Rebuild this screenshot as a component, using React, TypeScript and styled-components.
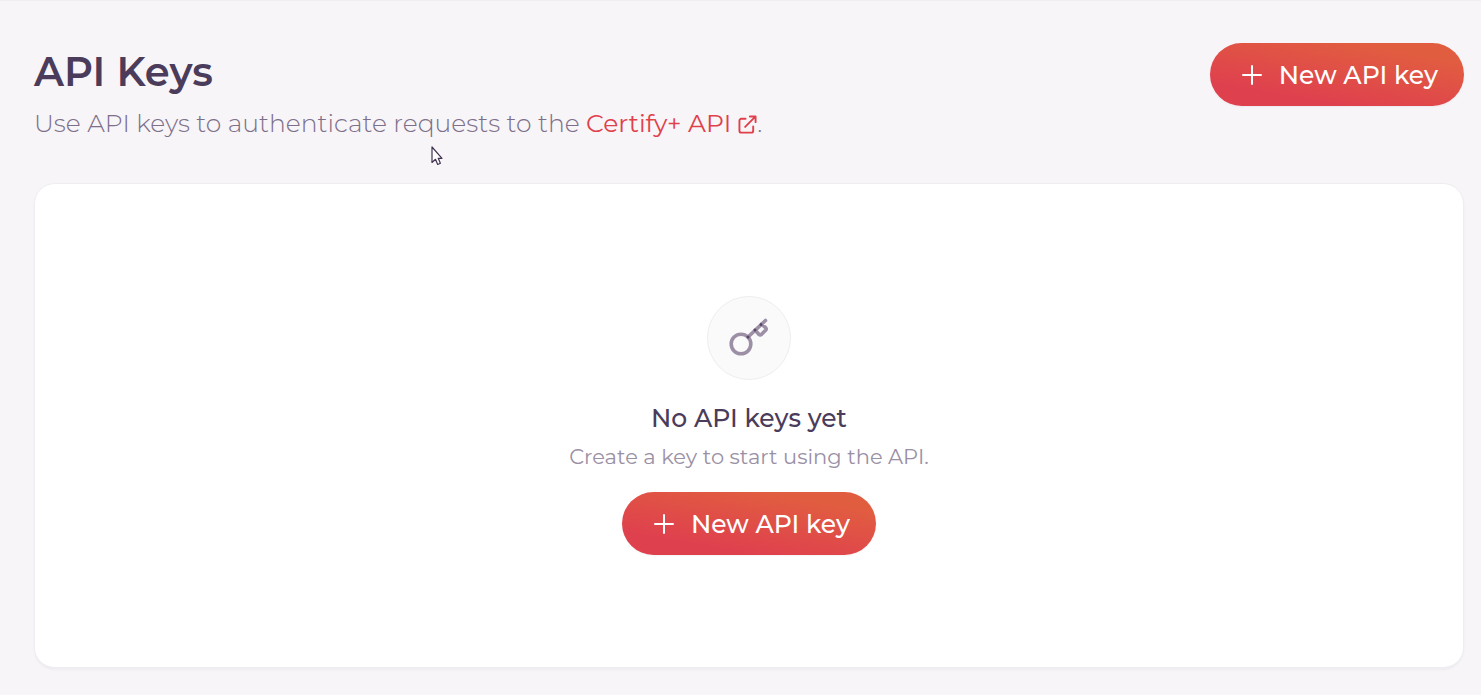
import React from "react";
import styled, { createGlobalStyle } from "styled-components";

const GlobalStyle = createGlobalStyle`
  *, *::before, *::after { box-sizing: border-box; }
  body {
    margin: 0;
    background: #f7f5f8;
    color: #4a3c5a;
    font-family: Montserrat, Inter, "Open Sans", sans-serif;
  }
  h1, h2, p { margin: 0; }
`;

const Page = styled.main`
  position: relative;
  display: flex;
  flex-direction: column;
  min-height: 100vh;
  padding: 42px 17px 26px 34px;
  border-top: 1px solid #f0eef2;
`;

const Header = styled.header`
  display: flex;
  justify-content: space-between;
  align-items: flex-start;
  margin-bottom: 42px;
`;

const Title = styled.h1`
  font-size: 40px;
  line-height: 58px;
  font-weight: 600;
`;

const Subtitle = styled.p`
  margin-top: 4px;
  font-size: 25px;
  line-height: 36px;
  font-weight: 300;
  color: #7d6f89;
`;

const DocsLink = styled.a`
  color: #e0404a;
  font-weight: 400;
  text-decoration: none;
  white-space: nowrap;

  svg {
    margin-left: 7px;
    vertical-align: -2px;
  }
`;

const PrimaryButton = styled.button`
  display: inline-flex;
  align-items: center;
  justify-content: center;
  flex: none;
  gap: 17px;
  height: 63px;
  padding: 0 26px 0 32px;
  border: 0;
  border-radius: 32px;
  background: linear-gradient(10deg, #df404e 22%, #e15d40 82%);
  box-shadow: 0 1px 2px rgba(74, 60, 90, 0.06);
  color: #fff;
  font: inherit;
  font-size: 25px;
  line-height: 32px;
  font-weight: 500;
  cursor: pointer;
`;

const Card = styled.section`
  display: flex;
  flex: 1;
  flex-direction: column;
  align-items: center;
  justify-content: center;
  border: 1px solid #efedf1;
  border-bottom-width: 2px;
  border-radius: 21px;
  background: #fff;
  box-shadow: 0 1px 2px #eeecf0;
  text-align: center;
`;

const IconCircle = styled.div`
  display: flex;
  align-items: center;
  justify-content: center;
  width: 84px;
  height: 84px;
  margin-bottom: 20px;
  border: 1px solid #eeedef;
  border-radius: 50%;
  background: #fafafa;
`;

const EmptyTitle = styled.h2`
  font-size: 25px;
  line-height: 36px;
  font-weight: 500;
`;

const EmptyText = styled.p`
  margin: 6px 0 20px;
  font-size: 21px;
  line-height: 30px;
  font-weight: 400;
  color: #9a90a5;
`;

const Cursor = styled.svg`
  position: absolute;
  left: 431px;
  top: 145px;
  pointer-events: none;
`;

const NewKeyButton = () => (
  <PrimaryButton type="button">
    <svg width="20" height="20" viewBox="0 0 20 20" fill="none" stroke="#fff" strokeWidth="2" strokeLinecap="round" aria-hidden="true">
      <path d="M10 1v18M1 10h18" />
    </svg>
    New API key
  </PrimaryButton>
);

const ExternalIcon = () => (
  <svg width="19" height="19" viewBox="0 0 20 20" fill="none" stroke="currentColor" strokeWidth="2" strokeLinecap="round" strokeLinejoin="round" aria-hidden="true">
    <path d="M8 4H3.500A2 2 0 0 0 1.500 6v10.500a2 2 0 0 0 2 2H14a2 2 0 0 0 2-2V12M7.500 12.500 18 2M12.500 1.500H18.500V7.500" />
  </svg>
);

const KeyIcon = () => (
  <svg width="40" height="40" viewBox="0 0 40 40" fill="none" stroke="#9c8fa6" strokeWidth="3.600" strokeLinecap="round" strokeLinejoin="round" aria-hidden="true">
    <circle cx="12" cy="26" r="9.800" />
    <path d="M19 19 36.500 2.500M26 12l3.800 4.300q1.400 1.200 2.800 0l4-4q1.200-1.300 0-2.600L32.500 6" />
    <path d="M19 19h.01M26 12h.01M32 6.500h.01" stroke="#5a4768" strokeWidth="3" />
  </svg>
);

export default function App() {
  return (
    <>
      <GlobalStyle />
      <Page>
        <Header>
          <div>
            <Title>API Keys</Title>
            <Subtitle>
              Use API keys to authenticate requests to the{" "}
              <DocsLink href="#api">
                Certify+ API
                <ExternalIcon />
              </DocsLink>
              .
            </Subtitle>
          </div>
          <NewKeyButton />
        </Header>
        <Card>
          <IconCircle>
            <KeyIcon />
          </IconCircle>
          <EmptyTitle>No API keys yet</EmptyTitle>
          <EmptyText>Create a key to start using the API.</EmptyText>
          <NewKeyButton />
        </Card>
        <Cursor width="13" height="20" viewBox="0 0 13 20" fill="#fff" stroke="#403350" strokeWidth="1.200" strokeLinejoin="round" aria-hidden="true">
          <path d="M1 1v15.500l3.500-3.200 2.200 5.200 2.700-1.200-2.200-5H11z" />
        </Cursor>
      </Page>
    </>
  );
}
